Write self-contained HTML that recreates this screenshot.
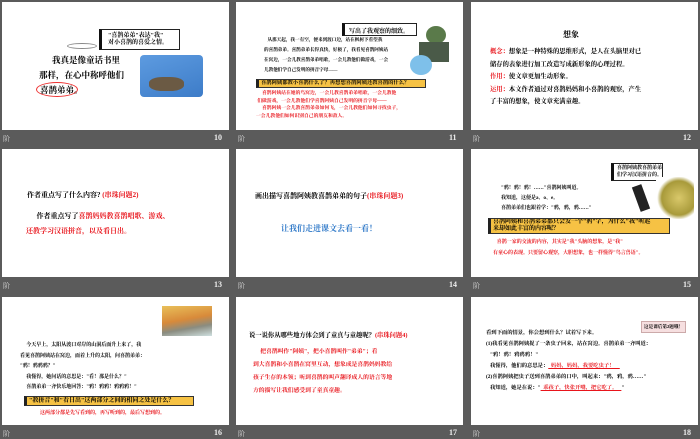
<!DOCTYPE html><html><head><meta charset="utf-8"><style>
*{margin:0;padding:0;box-sizing:border-box}
body{width:700px;height:438px;background:#5b5b5b;position:relative;overflow:hidden;font-family:"Liberation Serif","Noto Serif CJK SC","Noto Sans CJK SC",serif}
.s{position:absolute;width:227px;height:128px;background:#fff;overflow:hidden}
.s div,.s span{position:absolute;white-space:nowrap}
.f{position:absolute;color:#ddd;font-size:7px}
.n{position:absolute;color:#eee;font-size:8px;font-weight:bold}
.r{color:#e8141b}.b{font-weight:bold}
.hl{background:#f6c244;border:1px solid #333;border-left:3px solid #222;font-size:6px;font-weight:bold;padding:0 2px;overflow:hidden}
</style></head><body>
<!-- row1 -->
<div class="s" style="left:2px;top:2px">
 <div style="left:97px;top:27px;width:81px;height:21px;border:1.5px solid #222;border-left:3px solid #111;font-size:6px;font-weight:bold;padding:3px 6px;line-height:7px">"喜鹊弟弟"表达"我"<br>对小喜鹊的喜爱之情。</div>
 <div style="left:65px;top:41px;width:30px;height:6px;border:1px solid #888;border-radius:50%"></div>
 <div style="left:50px;top:52px;font-size:8.5px;font-weight:bold">我真是像童话书里</div>
 <div style="left:37px;top:67px;font-size:8.5px;font-weight:bold">那样，在心中称呼他们</div>
 <div style="left:34px;top:80px;width:42px;height:15px;border:1px solid #e33;border-radius:50%"></div>
 <div style="left:38px;top:82px;font-size:8.5px;font-weight:bold">喜鹊弟弟。</div>
 <div style="left:138px;top:53px;width:63px;height:42px;border-radius:4px;background:linear-gradient(160deg,#5d9be0,#3d7cc8)"></div>
 <div style="left:147px;top:75px;width:35px;height:14px;background:#6b5a44;border-radius:40%"></div>
</div>
<div class="f" style="left:3px;top:134px">阶</div><div class="n" style="left:214px;top:133px">10</div>

<div class="s" style="left:236px;top:2px">
 <div style="left:106px;top:21px;width:75px;height:13px;border:1px solid #222;border-left:3px solid #111;font-size:6px;font-weight:bold;padding:2px 4px">写出了我观察的细致。</div>
 <div style="left:190px;top:24px;width:20px;height:18px;border-radius:50%;background:#5a7a4a"></div>
 <div style="left:183px;top:40px;width:30px;height:20px;background:#4a5a48"></div>
 <div style="left:174px;top:53px;width:22px;height:20px;border-radius:50%;background:#7ec0ea"></div>
 <div class="b" style="left:28px;top:33px;font-size:4.6px;line-height:10px">&nbsp;&nbsp;&nbsp;从那天起，我一有空，便来到渡口边，站在枫树下看望我<br>的喜鹊弟弟。喜鹊弟弟长得真快，好极了，我看见喜鹊阿姨站<br>在窝边，一会儿教喜鹊弟弟唱歌，一会儿教他们做游戏，一会<br>儿教他们学自己发明的拼音字母——</div>
 <div class="hl" style="left:20px;top:77px;width:170px;height:9px;line-height:7px;font-size:5.3px">喜鹊阿姨都教小喜鹊什么了？再想想喜鹊阿姨还教喜鹊的什么？</div>
 <div class="r b" style="left:20px;top:88px;font-size:4.8px;line-height:7.5px">&nbsp;&nbsp;&nbsp;&nbsp;&nbsp;喜鹊阿姨站在她的鸟窝边，一会儿教喜鹊弟弟唱歌，一会儿教他<br>&nbsp;们做游戏，一会儿教他们学喜鹊阿姨自己发明的拼音字母——<br>&nbsp;&nbsp;&nbsp;&nbsp;&nbsp;喜鹊阿姨一会儿教喜鹊弟弟如何飞，一会儿教他们如何寻找虫子，<br>一会儿教他们如何识别自己的朋友和敌人。</div>
</div>
<div class="f" style="left:238px;top:134px">阶</div><div class="n" style="left:449px;top:133px">11</div>

<div class="s" style="left:471px;top:2px">
 <div class="b" style="left:92px;top:27px;font-size:8px">想象</div>
 <div class="b" style="left:19px;top:44px;font-size:6.3px;line-height:12.5px"><span class="r" style="position:static">概念：</span>想象是一种特殊的思维形式，是人在头脑里对已<br>储存的表象进行加工改造写成新形象的心理过程。<br><span class="r" style="position:static">作用：</span>使文章更加生动形象。<br><span class="r" style="position:static">运用：</span>本文作者通过对喜鹊妈妈和小喜鹊的观察，产生<br>了丰富的想象，使文章充满童趣。</div>
</div>
<div class="f" style="left:473px;top:134px">阶</div><div class="n" style="left:683px;top:133px">12</div>

<!-- row2 -->
<div class="s" style="left:2px;top:149px">
 <div class="b" style="left:25px;top:41px;font-size:7px">作者重点写了什么内容? <span class="r" style="position:static">(串珠问题2)</span></div>
 <div class="b" style="left:24px;top:60px;font-size:7px;line-height:15px">&nbsp;&nbsp;&nbsp;&nbsp;&nbsp;&nbsp;作者重点写了<span class="r" style="position:static">喜鹊妈妈教喜鹊唱歌、游戏、</span><br><span class="r" style="position:static">还教学习汉语拼音，以及看日出。</span></div>
</div>
<div class="f" style="left:3px;top:281px">阶</div><div class="n" style="left:214px;top:280px">13</div>

<div class="s" style="left:236px;top:149px">
 <div class="b" style="left:19px;top:42px;font-size:7px">画出描写喜鹊阿姨教喜鹊弟弟的句子<span class="r" style="position:static">(串珠问题3)</span></div>
 <div class="b" style="left:45px;top:74px;font-size:8px;color:#2e78c8">让我们走进课文去看一看！</div>
</div>
<div class="f" style="left:238px;top:281px">阶</div><div class="n" style="left:449px;top:280px">14</div>

<div class="s" style="left:471px;top:149px">
 <div style="left:140px;top:14px;width:52px;height:18px;border:1px solid #222;border-left:3px solid #111;font-size:5px;font-weight:bold;padding:1px 3px;line-height:7px">喜鹊阿姨教喜鹊弟弟<br>们学习汉语拼音的。</div>
 <div style="left:185px;top:28px;width:38px;height:42px;background:radial-gradient(circle at 60% 50%,#d9c86a,#a89a3a 55%,#fff 70%)"></div>
 <div style="left:165px;top:36px;width:10px;height:26px;background:#222;transform:rotate(-20deg)"></div>
 <div class="b" style="left:30px;top:35px;font-size:5px;line-height:10px">"鸦！鸦！鸦！……"喜鹊阿姨叫道。<br>我知道，这便是a、o、e。<br>喜鹊弟弟们也跟着学："鸦，鸦，鸦……"</div>
 <div class="hl" style="left:17px;top:69px;width:182px;height:16px;line-height:7px">喜鹊阿姨和喜鹊弟弟都只会发一个"鸦"字，为什么"我"听起<br>来却如此丰富的内容呢？</div>
 <div class="r b" style="left:17px;top:88px;font-size:5px;line-height:11px">&nbsp;&nbsp;&nbsp;&nbsp;&nbsp;&nbsp;&nbsp;喜鹊一家的交流的内容，其实是"我"头脑的想象，是"我"<br>&nbsp;&nbsp;&nbsp;&nbsp;有童心的表现。只要留心观察，大胆想象，也一样懂得"鸟言兽语"。</div>
</div>
<div class="f" style="left:473px;top:281px">阶</div><div class="n" style="left:683px;top:280px">15</div>

<!-- row3 -->
<div class="s" style="left:2px;top:297px">
 <div style="left:160px;top:9px;width:50px;height:30px;background:linear-gradient(170deg,#e9c05a,#d88a3a 45%,#8a8c80 70%,#cfe0e0)"></div>
 <div class="b" style="left:18px;top:44px;font-size:5px;line-height:10.5px">&nbsp;&nbsp;&nbsp;&nbsp;&nbsp;今天早上，太阳从渡口对岸的山洞后面升上来了，我<br>看见喜鹊阿姨站在窝边，面着上升的太阳，问喜鹊弟弟：<br>"鸦！鸦鸦鸦？"<br>&nbsp;&nbsp;&nbsp;&nbsp;&nbsp;我懂得，她问话的意思是："看！那是什么？"<br>&nbsp;&nbsp;&nbsp;&nbsp;&nbsp;喜鹊弟弟一齐快乐地回答："鸦！鸦鸦！鸦鸦鸦！"</div>
 <div class="hl" style="left:22px;top:99px;width:170px;height:10px;line-height:9px">"教拼音"和"看日出"这两部分之间的相同之处是什么？</div>
 <div class="r b" style="left:38px;top:112px;font-size:5px">这两部分都是先写看到的，再写听到的，最后写想到的。</div>
</div>
<div class="f" style="left:3px;top:429px">阶</div><div class="n" style="left:214px;top:428px">16</div>

<div class="s" style="left:236px;top:297px">
 <div class="b" style="left:13px;top:33px;font-size:6.3px">说一说你从哪些地方体会到了童真与童趣呢？<span class="r" style="position:static">(串珠问题4)</span></div>
 <div class="r b" style="left:17px;top:49px;font-size:5.8px;line-height:13px">&nbsp;&nbsp;&nbsp;&nbsp;&nbsp;把喜鹊叫作"阿姨"，把小喜鹊叫作"弟弟"；看<br>到大喜鹊和小喜鹊在窝里互动，想象成是喜鹊妈妈教给<br>孩子生存的本领；听到喜鹊的叫声翻译成人的语言等地<br>方的描写让我们感受到了童真童趣。</div>
</div>
<div class="f" style="left:238px;top:429px">阶</div><div class="n" style="left:449px;top:428px">17</div>

<div class="s" style="left:471px;top:297px">
 <div style="left:170px;top:24px;width:45px;height:12px;background:#f6dfe0;border:1px solid #caa;font-size:4.6px;font-weight:bold;padding:2px 2px">这是课后第2题哦！</div>
 <div class="b" style="left:15px;top:31px;font-size:5.3px;line-height:11px">看到下面的情景，你会想到什么？试着写下来。<br>(1)我看见喜鹊阿姨捉了一条虫子回来，站在窝边。喜鹊弟弟一齐叫道：<br>&nbsp;&nbsp;&nbsp;"鸦！鸦！鸦鸦鸦！"<br>&nbsp;&nbsp;&nbsp;我懂得，他们的意思是：<span class="r" style="position:static;text-decoration:underline">&nbsp;&nbsp;妈妈，妈妈，我要吃虫子！&nbsp;&nbsp;&nbsp;&nbsp;</span><br>(2)喜鹊阿姨把虫子送到喜鹊弟弟的口中，叫起来："鸦，鸦，鸦……"<br>&nbsp;&nbsp;&nbsp;我知道，她是在说："<span class="r" style="position:static;text-decoration:underline">&nbsp;&nbsp;乖孩子，快张开嘴，把它吃了。&nbsp;&nbsp;&nbsp;</span>"</div>
</div>
<div class="f" style="left:473px;top:429px">阶</div><div class="n" style="left:683px;top:428px">18</div>
</body></html>
